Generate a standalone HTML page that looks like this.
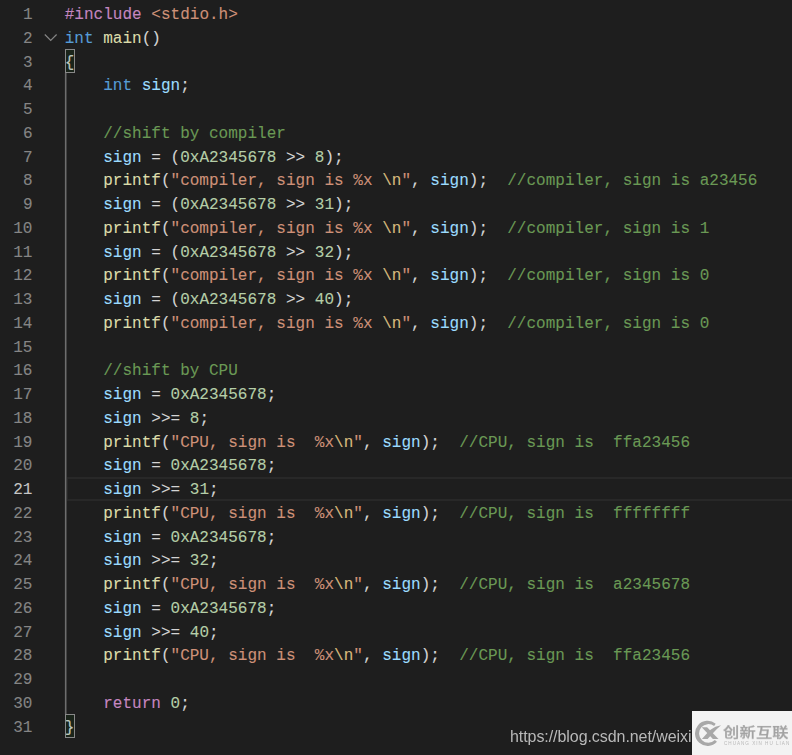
<!DOCTYPE html>
<html lang="en">
<head>
<meta charset="utf-8">
<title>code</title>
<style>
html,body{margin:0;padding:0;}
body{width:792px;height:755px;background:#1e1e1e;overflow:hidden;position:relative;
 font-family:"Liberation Mono","DejaVu Sans Mono",monospace;font-size:16px;letter-spacing:0.018px;color:#d4d4d4;}
.ln{position:absolute;left:0;width:32.5px;text-align:right;color:#858585;height:23.75px;line-height:23.75px;white-space:pre;}
.ln.act{color:#c6c6c6;}
.cl{position:absolute;left:64.7px;height:23.75px;line-height:23.75px;white-space:pre;}
.cl,.ln{transform:scaleY(1.07);transform-origin:0 17px;-webkit-text-stroke:0.1px currentColor;}
.p{color:#c586c0}.s{color:#ce9178}.k{color:#569cd6}.f{color:#dcdcaa}.v{color:#9cdcfe}.n{color:#b5cea8}.e{color:#d7ba7d}.c{color:#6a9955}.d{color:#d4d4d4}
.guide{position:absolute;left:64px;width:3px;z-index:2;background:linear-gradient(to right,#262626 0,#262626 1px,#6e6e6e 1px,#6e6e6e 2px,#444444 2px,#444444 3px);}
.cur{position:absolute;left:65px;right:0;box-sizing:border-box;border-top:2px solid #282828;border-bottom:2px solid #282828;border-left:3px solid #282828;}
.bm{position:absolute;box-sizing:border-box;border:1px solid #888888;background:rgba(0,100,0,0.1);}
.wm{will-change:transform;position:absolute;left:510px;top:724.5px;font-family:"Liberation Sans",sans-serif;font-size:16px;letter-spacing:-0.067px;color:#b8b8b8;white-space:pre;line-height:24px;}
.logo{position:absolute;left:692px;top:711px;width:100px;height:44px;background:#f3f3f3;}
.logo .cn{will-change:transform;position:absolute;left:31.2px;top:12.2px;font-family:"Liberation Sans","Noto Sans CJK SC",sans-serif;font-size:16px;line-height:18px;letter-spacing:0.2px;color:#a2a2a2;font-weight:500;-webkit-text-stroke:0.25px #a2a2a2;transform:scale(1.015,0.89);transform-origin:0 100%;white-space:pre;}
.logo .en{will-change:transform;position:absolute;left:31.5px;top:28.5px;font-family:"Liberation Sans",sans-serif;font-size:4.6px;line-height:7px;letter-spacing:1.0px;color:#b8b8b8;white-space:pre;}
</style>
</head>
<body>
<div class="ln" style="top:4.00px">1</div><div class="cl" style="top:4.00px"><span class="p">#include</span><span class="d"> </span><span class="s">&lt;stdio.h&gt;</span></div>
<div class="ln" style="top:27.75px">2</div><div class="cl" style="top:27.75px"><span class="k">int</span><span class="d"> </span><span class="f">main</span><span class="d">()</span></div>
<div class="ln" style="top:51.50px">3</div><div class="cl" style="top:51.50px"><span class="d">{</span></div>
<div class="ln" style="top:75.25px">4</div><div class="cl" style="top:75.25px">    <span class="k">int</span><span class="d"> </span><span class="v">sign</span><span class="d">;</span></div>
<div class="ln" style="top:99.00px">5</div>
<div class="ln" style="top:122.75px">6</div><div class="cl" style="top:122.75px">    <span class="c">//shift by compiler</span></div>
<div class="ln" style="top:146.50px">7</div><div class="cl" style="top:146.50px">    <span class="v">sign</span><span class="d"> = (</span><span class="n">0xA2345678</span><span class="d"> &gt;&gt; </span><span class="n">8</span><span class="d">);</span></div>
<div class="ln" style="top:170.25px">8</div><div class="cl" style="top:170.25px">    <span class="f">printf</span><span class="d">(</span><span class="s">"compiler, sign is %x </span><span class="e">\n</span><span class="s">"</span><span class="d">, </span><span class="v">sign</span><span class="d">);  </span><span class="c">//compiler, sign is a23456</span></div>
<div class="ln" style="top:194.00px">9</div><div class="cl" style="top:194.00px">    <span class="v">sign</span><span class="d"> = (</span><span class="n">0xA2345678</span><span class="d"> &gt;&gt; </span><span class="n">31</span><span class="d">);</span></div>
<div class="ln" style="top:217.75px">10</div><div class="cl" style="top:217.75px">    <span class="f">printf</span><span class="d">(</span><span class="s">"compiler, sign is %x </span><span class="e">\n</span><span class="s">"</span><span class="d">, </span><span class="v">sign</span><span class="d">);  </span><span class="c">//compiler, sign is 1</span></div>
<div class="ln" style="top:241.50px">11</div><div class="cl" style="top:241.50px">    <span class="v">sign</span><span class="d"> = (</span><span class="n">0xA2345678</span><span class="d"> &gt;&gt; </span><span class="n">32</span><span class="d">);</span></div>
<div class="ln" style="top:265.25px">12</div><div class="cl" style="top:265.25px">    <span class="f">printf</span><span class="d">(</span><span class="s">"compiler, sign is %x </span><span class="e">\n</span><span class="s">"</span><span class="d">, </span><span class="v">sign</span><span class="d">);  </span><span class="c">//compiler, sign is 0</span></div>
<div class="ln" style="top:289.00px">13</div><div class="cl" style="top:289.00px">    <span class="v">sign</span><span class="d"> = (</span><span class="n">0xA2345678</span><span class="d"> &gt;&gt; </span><span class="n">40</span><span class="d">);</span></div>
<div class="ln" style="top:312.75px">14</div><div class="cl" style="top:312.75px">    <span class="f">printf</span><span class="d">(</span><span class="s">"compiler, sign is %x </span><span class="e">\n</span><span class="s">"</span><span class="d">, </span><span class="v">sign</span><span class="d">);  </span><span class="c">//compiler, sign is 0</span></div>
<div class="ln" style="top:336.50px">15</div>
<div class="ln" style="top:360.25px">16</div><div class="cl" style="top:360.25px">    <span class="c">//shift by CPU</span></div>
<div class="ln" style="top:384.00px">17</div><div class="cl" style="top:384.00px">    <span class="v">sign</span><span class="d"> = </span><span class="n">0xA2345678</span><span class="d">;</span></div>
<div class="ln" style="top:407.75px">18</div><div class="cl" style="top:407.75px">    <span class="v">sign</span><span class="d"> &gt;&gt;= </span><span class="n">8</span><span class="d">;</span></div>
<div class="ln" style="top:431.50px">19</div><div class="cl" style="top:431.50px">    <span class="f">printf</span><span class="d">(</span><span class="s">"CPU, sign is  %x</span><span class="e">\n</span><span class="s">"</span><span class="d">, </span><span class="v">sign</span><span class="d">);  </span><span class="c">//CPU, sign is  ffa23456</span></div>
<div class="ln" style="top:455.25px">20</div><div class="cl" style="top:455.25px">    <span class="v">sign</span><span class="d"> = </span><span class="n">0xA2345678</span><span class="d">;</span></div>
<div class="ln act" style="top:479.00px">21</div><div class="cl" style="top:479.00px">    <span class="v">sign</span><span class="d"> &gt;&gt;= </span><span class="n">31</span><span class="d">;</span></div>
<div class="ln" style="top:502.75px">22</div><div class="cl" style="top:502.75px">    <span class="f">printf</span><span class="d">(</span><span class="s">"CPU, sign is  %x</span><span class="e">\n</span><span class="s">"</span><span class="d">, </span><span class="v">sign</span><span class="d">);  </span><span class="c">//CPU, sign is  ffffffff</span></div>
<div class="ln" style="top:526.50px">23</div><div class="cl" style="top:526.50px">    <span class="v">sign</span><span class="d"> = </span><span class="n">0xA2345678</span><span class="d">;</span></div>
<div class="ln" style="top:550.25px">24</div><div class="cl" style="top:550.25px">    <span class="v">sign</span><span class="d"> &gt;&gt;= </span><span class="n">32</span><span class="d">;</span></div>
<div class="ln" style="top:574.00px">25</div><div class="cl" style="top:574.00px">    <span class="f">printf</span><span class="d">(</span><span class="s">"CPU, sign is  %x</span><span class="e">\n</span><span class="s">"</span><span class="d">, </span><span class="v">sign</span><span class="d">);  </span><span class="c">//CPU, sign is  a2345678</span></div>
<div class="ln" style="top:597.75px">26</div><div class="cl" style="top:597.75px">    <span class="v">sign</span><span class="d"> = </span><span class="n">0xA2345678</span><span class="d">;</span></div>
<div class="ln" style="top:621.50px">27</div><div class="cl" style="top:621.50px">    <span class="v">sign</span><span class="d"> &gt;&gt;= </span><span class="n">40</span><span class="d">;</span></div>
<div class="ln" style="top:645.25px">28</div><div class="cl" style="top:645.25px">    <span class="f">printf</span><span class="d">(</span><span class="s">"CPU, sign is  %x</span><span class="e">\n</span><span class="s">"</span><span class="d">, </span><span class="v">sign</span><span class="d">);  </span><span class="c">//CPU, sign is  ffa23456</span></div>
<div class="ln" style="top:669.00px">29</div>
<div class="ln" style="top:692.75px">30</div><div class="cl" style="top:692.75px">    <span class="p">return</span><span class="d"> </span><span class="n">0</span><span class="d">;</span></div>
<div class="ln" style="top:716.50px">31</div><div class="cl" style="top:716.50px"><span class="d">}</span></div>
<div class="guide" style="top:73px;height:641px"></div>
<div class="cur" style="top:477px;height:24px"></div>
<div class="bm" style="left:65px;top:49px;width:10px;height:24px"></div>
<div class="bm" style="left:65px;top:714px;width:10px;height:24px"></div>
<svg style="position:absolute;left:43px;top:30px" width="16" height="14" viewBox="0 0 16 14"><path d="M1.8 4.5 L7.7 10.4 L13.6 4.5" fill="none" stroke="#858585" stroke-width="1.2"/></svg>
<div class="wm">https://blog.csdn.net/weixi</div>
<div class="logo"><svg style="position:absolute;left:0;top:0" width="100" height="44" viewBox="0 0 100 44"><path d="M23.7 12.75 A12.6 12.6 0 1 0 24.96 30.83 L22.86 29.09 A9.3 9.3 0 1 1 22.13 15.07 Z" fill="#a8a8a8"/><path d="M9.7 16.3 L15.1 16.3 L26.5 28.1 L20.9 28.1 Z" fill="#a8a8a8"/><path d="M9.9 27.9 L15.6 27.9 L20.6 22.4 Q24.6 18 29.06 14.21 Q23 15.2 18.9 18.4 Q16.2 20.8 14.4 23 Z" fill="#a8a8a8"/></svg><div class="cn">创新互联</div><div class="en">CHUANG XIN HU LIAN</div></div>
</body>
</html>
